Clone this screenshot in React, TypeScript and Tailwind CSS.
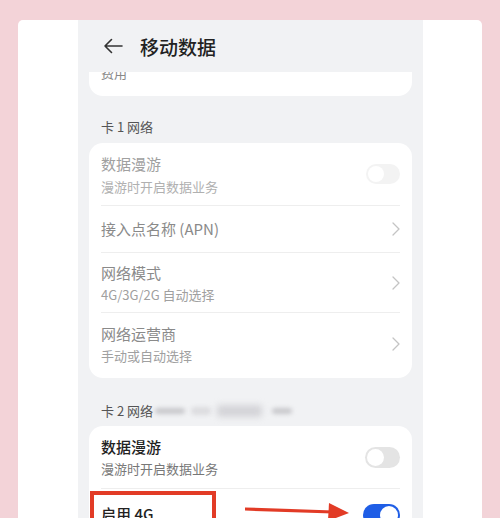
import React from "react";

const font = { fontFamily: '"Noto Sans CJK SC", "Noto Sans", sans-serif' };

function Chevron() {
  return (
    <svg width="8" height="14" viewBox="0 0 8 14" fill="none">
      <path d="M1 1l6 6-6 6" stroke="#c4c4c4" strokeWidth="1.3" strokeLinecap="round" strokeLinejoin="round" />
    </svg>
  );
}

export default function App() {
  return (
    <div className="w-[500px] h-[518px] bg-[#f3d3d8] overflow-hidden pt-[20px] px-[18px]" style={font}>
      <div className="bg-white h-[498px] rounded-t-[5px] pl-[60px] pr-[59px]">
        <div className="bg-[#f1f2f4] h-full px-[11px] overflow-hidden">
          {/* header */}
          <div className="h-[52px] flex items-center pl-[14px]">
            <svg width="20" height="16" viewBox="0 0 20 16" fill="none">
              <path d="M19 8H2M8.5 1.5L2 8l6.5 6.5" stroke="#333" strokeWidth="1.6" strokeLinecap="round" strokeLinejoin="round" />
            </svg>
            <span className="ml-[17px] text-[19px] leading-none text-[#222] font-medium">移动数据</span>
          </div>
          {/* clipped top card */}
          <div className="bg-white h-[24px] rounded-b-[14px] overflow-hidden px-[12px]">
            <div className="-mt-[7px] text-[13px] leading-[16px] text-[#888]">费用</div>
          </div>
          <div className="pl-[12px] pt-[22px] pb-[8px] text-[13px] leading-[17px] text-[#555]">卡 1 网络</div>
          {/* card 1 */}
          <div className="bg-white rounded-[14px] px-[12px]">
            <div className="h-[63px] flex items-center justify-between border-b border-[#eeeeee]">
              <div className="flex flex-col">
                <span className="text-[15px] leading-[20px] text-[#a0a0a0]">数据漫游</span>
                <span className="text-[13px] leading-[17px] mt-[4px] text-[#b0b0b0]">漫游时开启数据业务</span>
              </div>
              <div className="w-[34px] h-[20px] rounded-full bg-[#f3f3f3] flex items-center pl-[2px]">
                <div className="w-[16px] h-[16px] rounded-full bg-white"></div>
              </div>
            </div>
            <div className="h-[47px] flex items-center justify-between border-b border-[#eeeeee]">
              <span className="text-[15px] leading-[20px] text-[#8a8a8a]">接入点名称 (APN)</span>
              <Chevron />
            </div>
            <div className="h-[60px] flex items-center justify-between border-b border-[#eeeeee]">
              <div className="flex flex-col">
                <span className="text-[15px] leading-[20px] text-[#8a8a8a]">网络模式</span>
                <span className="text-[13px] leading-[17px] mt-[3px] text-[#a0a0a0]">4G/3G/2G 自动选择</span>
              </div>
              <Chevron />
            </div>
            <div className="h-[65px] flex items-center justify-between pb-[3px]">
              <div className="flex flex-col">
                <span className="text-[15px] leading-[20px] text-[#8a8a8a]">网络运营商</span>
                <span className="text-[13px] leading-[17px] mt-[3px] text-[#a0a0a0]">手动或自动选择</span>
              </div>
              <Chevron />
            </div>
          </div>
          <div className="pl-[12px] pt-[24px] pb-[7px] flex items-center text-[13px] leading-[17px] text-[#555]">
            <span>卡 2 网络</span>
            <span className="ml-[2px] w-[30px] h-[6px] bg-[#c8c8cc] rounded-full blur-[2px]"></span>
            <span className="ml-[6px] w-[20px] h-[8px] bg-[#dcdcdf] rounded-full blur-[2px]"></span>
            <span className="ml-[6px] w-[45px] h-[12px] bg-[#d4d4d8] rounded-[3px] blur-[3px]"></span>
            <span className="ml-[10px] w-[20px] h-[6px] bg-[#c8c8cc] rounded-full blur-[2px]"></span>
          </div>
          {/* card 2 */}
          <div className="bg-white rounded-t-[14px] px-[12px] relative">
            <div className="h-[63px] flex items-center justify-between border-b border-[#eeeeee]">
              <div className="flex flex-col">
                <span className="text-[15px] leading-[20px] text-[#222] font-medium">数据漫游</span>
                <span className="text-[13px] leading-[17px] mt-[3px] text-[#777]">漫游时开启数据业务</span>
              </div>
              <div className="w-[35px] h-[21px] rounded-full bg-[#e4e4e4] flex items-center pl-[2px]">
                <div className="w-[17px] h-[17px] rounded-full bg-white"></div>
              </div>
            </div>
            <div className="h-[40px] flex items-start justify-between pt-[15px]">
              <span className="text-[15px] leading-[20px] text-[#222] font-medium">启用 4G</span>
              <div className="w-[37px] h-[22px] rounded-full bg-[#1f5ee6] flex items-center justify-end pr-[2px]">
                <div className="w-[18px] h-[18px] rounded-full bg-white"></div>
              </div>
            </div>
            {/* red annotation box */}
            <div className="absolute left-[1px] top-[65px] w-[126px] h-[40px] border-[4px] border-[#e23b26]"></div>
            {/* red arrow */}
            <svg className="absolute left-[156px] top-[74px]" width="106" height="22" viewBox="0 0 106 22" fill="none">
              <path d="M0 9 L88 12" stroke="#e23b26" strokeWidth="3.2" strokeLinecap="round" />
              <path d="M84 3 L104 13 L83 21 Z" fill="#e23b26" />
            </svg>
          </div>
        </div>
      </div>
    </div>
  );
}
